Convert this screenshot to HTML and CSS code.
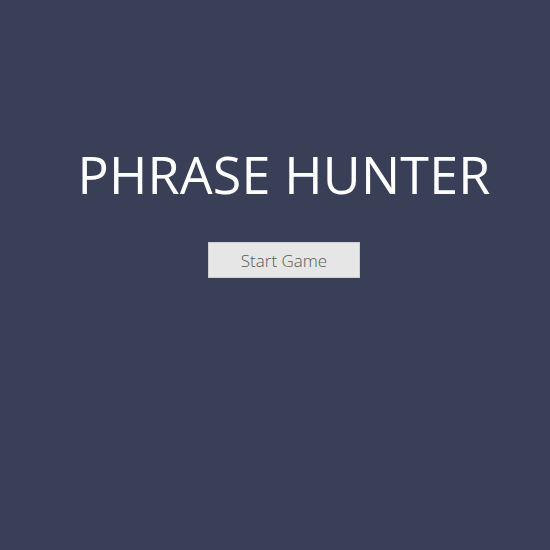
FILE: index.html
```html
<!DOCTYPE html>
<html>
<head>
<meta charset="utf-8">
<link rel="stylesheet" href="styles.css">
</head>
<body>
<div class="overlay">
  <h2 class="title">PHRASE HUNTER</h2>
  <button class="btn-reset">Start Game</button>
</div>
</body>
</html>
```
FILE: styles.css
```css
html, body {
  margin: 0;
  padding: 0;
  height: 100%;
}
body {
  background: #3a3f58;
  font-family: "Open Sans", "DejaVu Sans", sans-serif;
}
.overlay {
  display: flex;
  flex-direction: column;
  align-items: center;
  padding-top: 146px;
  padding-left: 18px;
}
.title {
  margin: 0;
  color: #ffffff;
  font-size: 52px;
  font-weight: 400;
  line-height: 56px;
  letter-spacing: 0.2px;
}
.btn-reset {
  margin-top: 40px;
  width: 152px;
  height: 36px;
  background: #e6e6e6;
  border: 1px solid #cfcfcf;
  color: #585858;
  font-family: "Open Sans", sans-serif;
  font-size: 17px;
  font-weight: 300;
  padding: 0;
}
```
